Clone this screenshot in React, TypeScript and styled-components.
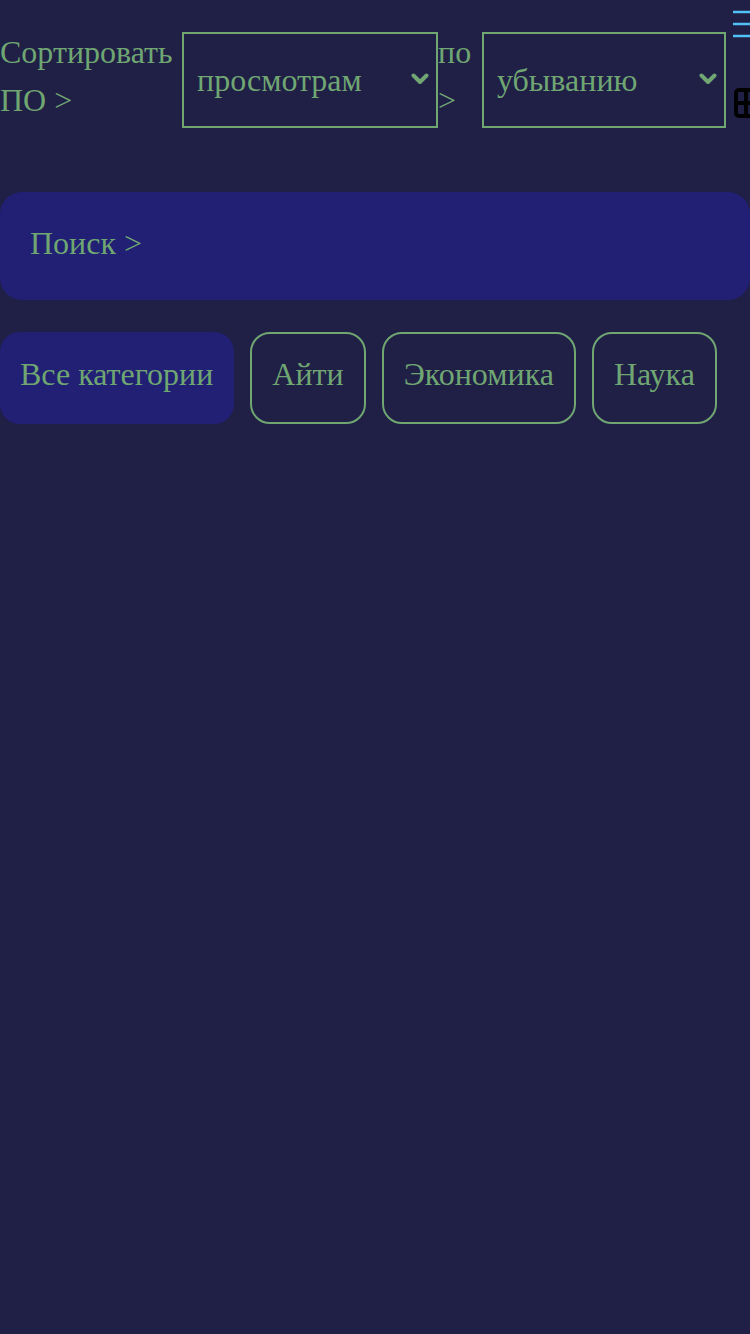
import React from "react";
import styled, { createGlobalStyle } from "styled-components";

const GREEN = "#6fa672";
const BG = "#201f46";
const FILL = "#212074";

const Global = createGlobalStyle`
  html, body { margin: 0; padding: 0; background: ${BG}; overflow: hidden; }
  body { font-family: "Liberation Serif", "Times New Roman", serif; color: ${GREEN}; }
  * { box-sizing: border-box; }
`;

const Page = styled.div`
  width: 750px;
  min-height: 1334px;
  background: ${BG};
  display: flex;
  flex-direction: column;
`;

const TopBar = styled.div`
  display: flex;
  align-items: flex-end;
  height: 128px;
  width: 780px;
`;

const Label = styled.div<{ $w: number }>`
  width: ${(p) => p.$w}px;
  flex: none;
  font-size: 32px;
  line-height: 48px;
  align-self: flex-start;
  padding-top: 28px;
`;

const SelectWrap = styled.div<{ $w: number }>`
  position: relative;
  width: ${(p) => p.$w}px;
  height: 96px;
  flex: none;
`;

const Select = styled.select`
  appearance: none;
  -webkit-appearance: none;
  width: 100%;
  height: 100%;
  background: ${BG};
  border: 2px solid ${GREEN};
  border-radius: 0;
  color: ${GREEN};
  font-family: "Liberation Serif", "Times New Roman", serif;
  font-size: 32px;
  padding: 0 0 0 13px;
  outline: none;
`;

const Chevron = styled.svg`
  position: absolute;
  right: 9px;
  top: 40px;
  width: 18px;
  height: 14px;
  pointer-events: none;
`;

const IconCol = styled.div`
  align-self: flex-start;
  display: flex;
  flex-direction: column;
  margin-left: 7px;
  width: 30px;
  height: 128px;
`;

const MenuButton = styled.svg`
  width: 30px;
  height: 48px;
  display: block;
`;

const GridButton = styled.svg`
  width: 30px;
  height: 40px;
  margin-top: 38px;
  display: block;
`;

const Search = styled.input`
  margin-top: 64px;
  width: 750px;
  height: 108px;
  border: none;
  border-radius: 22px;
  background: ${FILL};
  color: ${GREEN};
  font-family: "Liberation Serif", "Times New Roman", serif;
  font-size: 32px;
  padding: 0 30px 6px;
  outline: none;
  &::placeholder { color: ${GREEN}; opacity: 1; }
`;

const Chips = styled.div`
  margin-top: 32px;
  display: flex;
  gap: 16px;
`;

const Chip = styled.button<{ $active?: boolean }>`
  height: 92px;
  padding: ${(p) => (p.$active ? "0 21px 8px 20px" : "0 20px 8px")};
  border-radius: 20px;
  border: ${(p) => (p.$active ? "none" : `2px solid ${GREEN}`)};
  background: ${(p) => (p.$active ? FILL : BG)};
  color: ${GREEN};
  font-family: "Liberation Serif", "Times New Roman", serif;
  font-size: 32px;
  line-height: 48px;
  cursor: pointer;
`;

const Down = () => (
  <Chevron viewBox="0 0 18 14">
    <path d="M2.5 3.5 L9 10 L15.5 3.5" fill="none" stroke={GREEN} strokeWidth="4" strokeLinecap="round" strokeLinejoin="round" />
  </Chevron>
);

export default function App() {
  return (
    <Page>
      <Global />
      <TopBar>
        <Label $w={182}>Сортировать ПО &gt;</Label>
        <SelectWrap $w={256}>
          <Select defaultValue="views">
            <option value="views">просмотрам</option>
            <option value="date">дате</option>
          </Select>
          <Down />
        </SelectWrap>
        <Label $w={44}>по &gt;</Label>
        <SelectWrap $w={244}>
          <Select defaultValue="desc">
            <option value="desc">убыванию</option>
            <option value="asc">возрастанию</option>
          </Select>
          <Down />
        </SelectWrap>
        <IconCol>
          <MenuButton viewBox="0 0 30 48">
            <g stroke="#4fc3f7" strokeWidth="2.5">
              <line x1="0" y1="12" x2="30" y2="12" />
              <line x1="0" y1="24" x2="30" y2="24" />
              <line x1="0" y1="36" x2="30" y2="36" />
            </g>
          </MenuButton>
          <GridButton viewBox="0 0 30 40">
            <g fill="none" stroke="#000" strokeWidth="4">
              <rect x="3" y="4" width="20" height="26" rx="3" />
              <line x1="3" y1="17" x2="23" y2="17" />
              <line x1="13" y1="4" x2="13" y2="30" />
            </g>
          </GridButton>
        </IconCol>
      </TopBar>
      <Search placeholder="Поиск >" />
      <Chips>
        <Chip $active>Все категории</Chip>
        <Chip>Айти</Chip>
        <Chip>Экономика</Chip>
        <Chip>Наука</Chip>
      </Chips>
    </Page>
  );
}
